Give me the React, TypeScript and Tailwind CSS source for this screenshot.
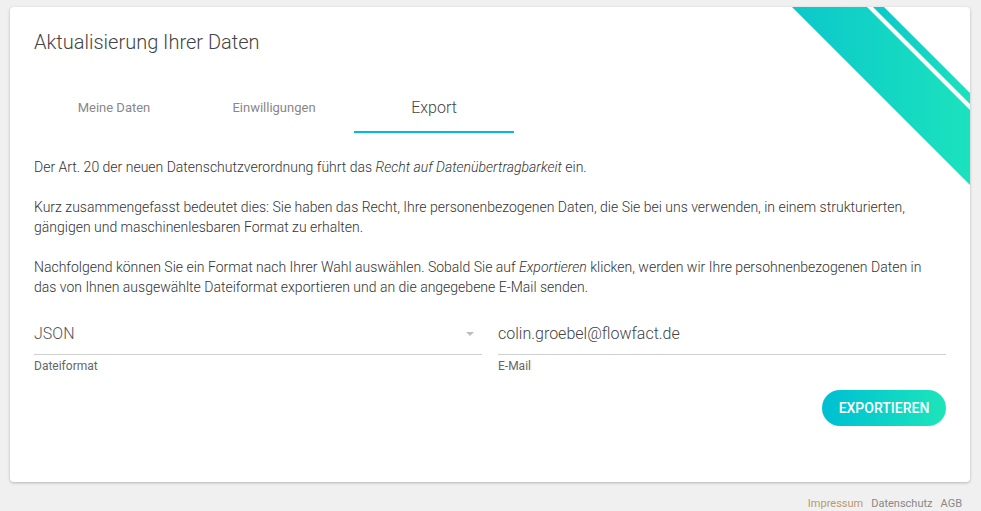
import { useState } from "react";

const tabs = ["Meine Daten", "Einwilligungen", "Export"];

function CornerStripes() {
  return (
    <svg
      className="pointer-events-none absolute right-0 top-0"
      width="178"
      height="178"
      viewBox="0 0 178 178"
      xmlns="http://www.w3.org/2000/svg"
    >
      <defs>
        <linearGradient id="stripe" x1="0" y1="0" x2="1" y2="0">
          <stop offset="0" stopColor="#0bc8cb" />
          <stop offset="1" stopColor="#1be2bd" />
        </linearGradient>
      </defs>
      <polygon points="0,0 75,0 178,103 178,178" fill="url(#stripe)" />
      <polygon points="81,0 92,0 178,86 178,97" fill="url(#stripe)" />
    </svg>
  );
}

export default function App() {
  const [activeTab, setActiveTab] = useState(2);

  return (
    <div
      className="min-h-[511px] bg-[#f0f0f0] pl-[10px] pr-[11px] pt-[7px]"
      style={{ fontFamily: "Roboto, 'Noto Sans', sans-serif" }}
    >
      <div className="relative overflow-hidden rounded-[4px] bg-white px-6 pb-[56px] pt-[23px] shadow-[0_1px_3px_rgba(0,0,0,0.25)]">
        <CornerStripes />
        <h1 className="text-[20px] font-light leading-6 text-[#444]">
          Aktualisierung Ihrer Daten
        </h1>

        <div className="mt-[31px] flex">
          {tabs.map((tab, i) => (
            <button
              key={tab}
              type="button"
              onClick={() => setActiveTab(i)}
              className={`flex h-12 w-40 items-center justify-center border-b-2 ${
                i === activeTab
                  ? "border-[#00bcd4] text-[16px] font-light text-[#444]"
                  : "border-transparent text-[13px] text-[#888]"
              }`}
            >
              {tab}
            </button>
          ))}
        </div>

        <div className="mt-6 flex flex-col gap-5 text-[14px] font-light leading-5 text-[#333]">
          <p>
            Der Art. 20 der neuen Datenschutzverordnung führt das{" "}
            <em>Recht auf Datenübertragbarkeit</em> ein.
          </p>
          <p>
            Kurz zusammengefasst bedeutet dies: Sie haben das Recht, Ihre
            personenbezogenen Daten, die Sie bei uns verwenden, in einem
            strukturierten, gängigen und maschinenlesbaren Format zu erhalten.
          </p>
          <p>
            Nachfolgend können Sie ein Format nach Ihrer Wahl auswählen. Sobald
            Sie auf <em>Exportieren</em> klicken, werden wir Ihre
            persohnenbezogenen Daten in das von Ihnen ausgewählte Dateiformat
            exportieren und an die angegebene E-Mail senden.
          </p>
        </div>

        <div className="mt-[25px] grid grid-cols-2 gap-4">
          <div>
            <div className="flex items-center justify-between border-b border-[#d0d0d0] pb-[8px]">
              <span className="text-[16px] font-light leading-6 text-[#555]">
                JSON
              </span>
              <span className="mr-[8px] h-0 w-0 border-x-[4px] border-t-[4px] border-x-transparent border-t-[#bdbdbd]" />
            </div>
            <div className="mt-[3px] text-[12px] leading-4 text-[#666]">
              Dateiformat
            </div>
          </div>
          <div>
            <div className="border-b border-[#d0d0d0] pb-[8px] text-[16px] font-light leading-6 text-[#444]">
              colin.groebel@flowfact.de
            </div>
            <div className="mt-[3px] text-[12px] leading-4 text-[#666]">
              E-Mail
            </div>
          </div>
        </div>

        <div className="mt-[16px] flex justify-end">
          <button
            type="button"
            className="h-9 w-[124px] rounded-full bg-gradient-to-r from-[#00bfd2] to-[#1de5b9] text-[14px] font-medium text-white"
          >
            EXPORTIEREN
          </button>
        </div>
      </div>

      <div className="mt-[14px] flex justify-end gap-[8px] pr-[8px] text-[11px] leading-4 text-[#888]">
        <a className="text-[#b89a6e]">Impressum</a>
        <a>Datenschutz</a>
        <a>AGB</a>
      </div>
    </div>
  );
}
